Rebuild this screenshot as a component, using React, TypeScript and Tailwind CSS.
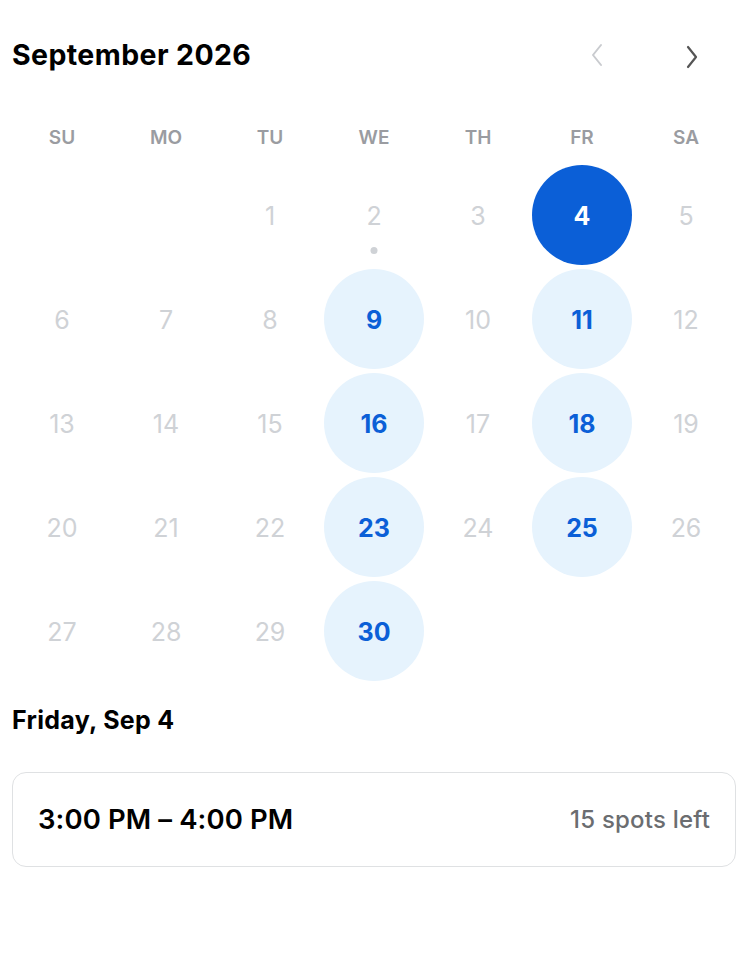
import React from "react";

const weekdays = ["SU", "MO", "TU", "WE", "TH", "FR", "SA"];
const available = new Set([9, 11, 16, 18, 23, 25, 30]);
const selected = 4;

export default function App() {
  const cells: (number | null)[] = [null, null];
  for (let d = 1; d <= 30; d++) cells.push(d);

  return (
    <div
      className="w-[748px] h-[956px] bg-white text-black"
      style={{ fontFamily: "Inter, 'Noto Sans', sans-serif" }}
    >
      <div className="px-[10px]">
        <div className="flex items-center justify-between h-[50px] mt-[30px] pl-[2px]">
          <h1 className="text-[28.5px] font-bold tracking-[0.4px]">September 2026</h1>
          <div className="flex items-center">
            <button className="w-[48px] h-[48px] flex items-center justify-center">
              <svg width="14" height="26" viewBox="0 0 14 26" fill="none">
                <path d="M11 3 L3 13 L11 23" stroke="#c9cbcf" strokeWidth="2" strokeLinecap="round" strokeLinejoin="round" />
              </svg>
            </button>
            <button className="w-[48px] h-[48px] ml-[47px] mr-[22px] mt-[4px] flex items-center justify-center">
              <svg width="14" height="26" viewBox="0 0 14 26" fill="none">
                <path d="M3 3 L11 13 L3 23" stroke="#555" strokeWidth="2.2" strokeLinecap="round" strokeLinejoin="round" />
              </svg>
            </button>
          </div>
        </div>

        <div className="grid grid-cols-7 mt-[38px] h-[40px] items-center">
          {weekdays.map((w) => (
            <div key={w} className="text-center text-[19px] font-semibold text-[#9a9ca1]">
              {w}
            </div>
          ))}
        </div>

        <div className="grid grid-cols-7 mt-[5px]">
          {cells.map((d, i) => {
            if (d === null) return <div key={i} className="h-[104px]" />;
            const isSel = d === selected;
            const isAvail = available.has(d);
            return (
              <div key={i} className="h-[104px] flex items-center justify-center relative">
                {isSel ? (
                  <div className="w-[100px] h-[100px] rounded-full bg-[#0b5fd7] text-white text-[25px] font-bold flex items-center justify-center pt-[4px]">
                    {d}
                  </div>
                ) : isAvail ? (
                  <div className="w-[100px] h-[100px] rounded-full bg-[#e6f3fd] text-[#0b5fd7] text-[25px] font-bold flex items-center justify-center pt-[4px]">
                    {d}
                  </div>
                ) : (
                  <div className="text-[25px] text-[#cfd2d6] pt-[4px]">{d}</div>
                )}
                {d === 2 && (
                  <div className="absolute left-1/2 top-[84px] -translate-x-1/2 w-[7px] h-[7px] rounded-full bg-[#cfd2d6]" />
                )}
              </div>
            );
          })}
        </div>

        <div className="pl-[2px] mt-[20px] text-[25px] font-bold tracking-[0.3px] h-[36px] flex items-center">
          Friday, Sep 4
        </div>

        <div className="ml-[2px] mr-[2px] mt-[33px] h-[95px] rounded-[14px] border-[1.5px] border-[#dfe1e3] flex items-center justify-between pl-[25px] pr-[25px]">
          <span className="text-[27.5px] font-semibold tracking-[0.1px]">3:00 PM – 4:00 PM</span>
          <span className="text-[24px] text-[#6b6d70] font-medium tracking-[0.2px]">15 spots left</span>
        </div>
      </div>
    </div>
  );
}
